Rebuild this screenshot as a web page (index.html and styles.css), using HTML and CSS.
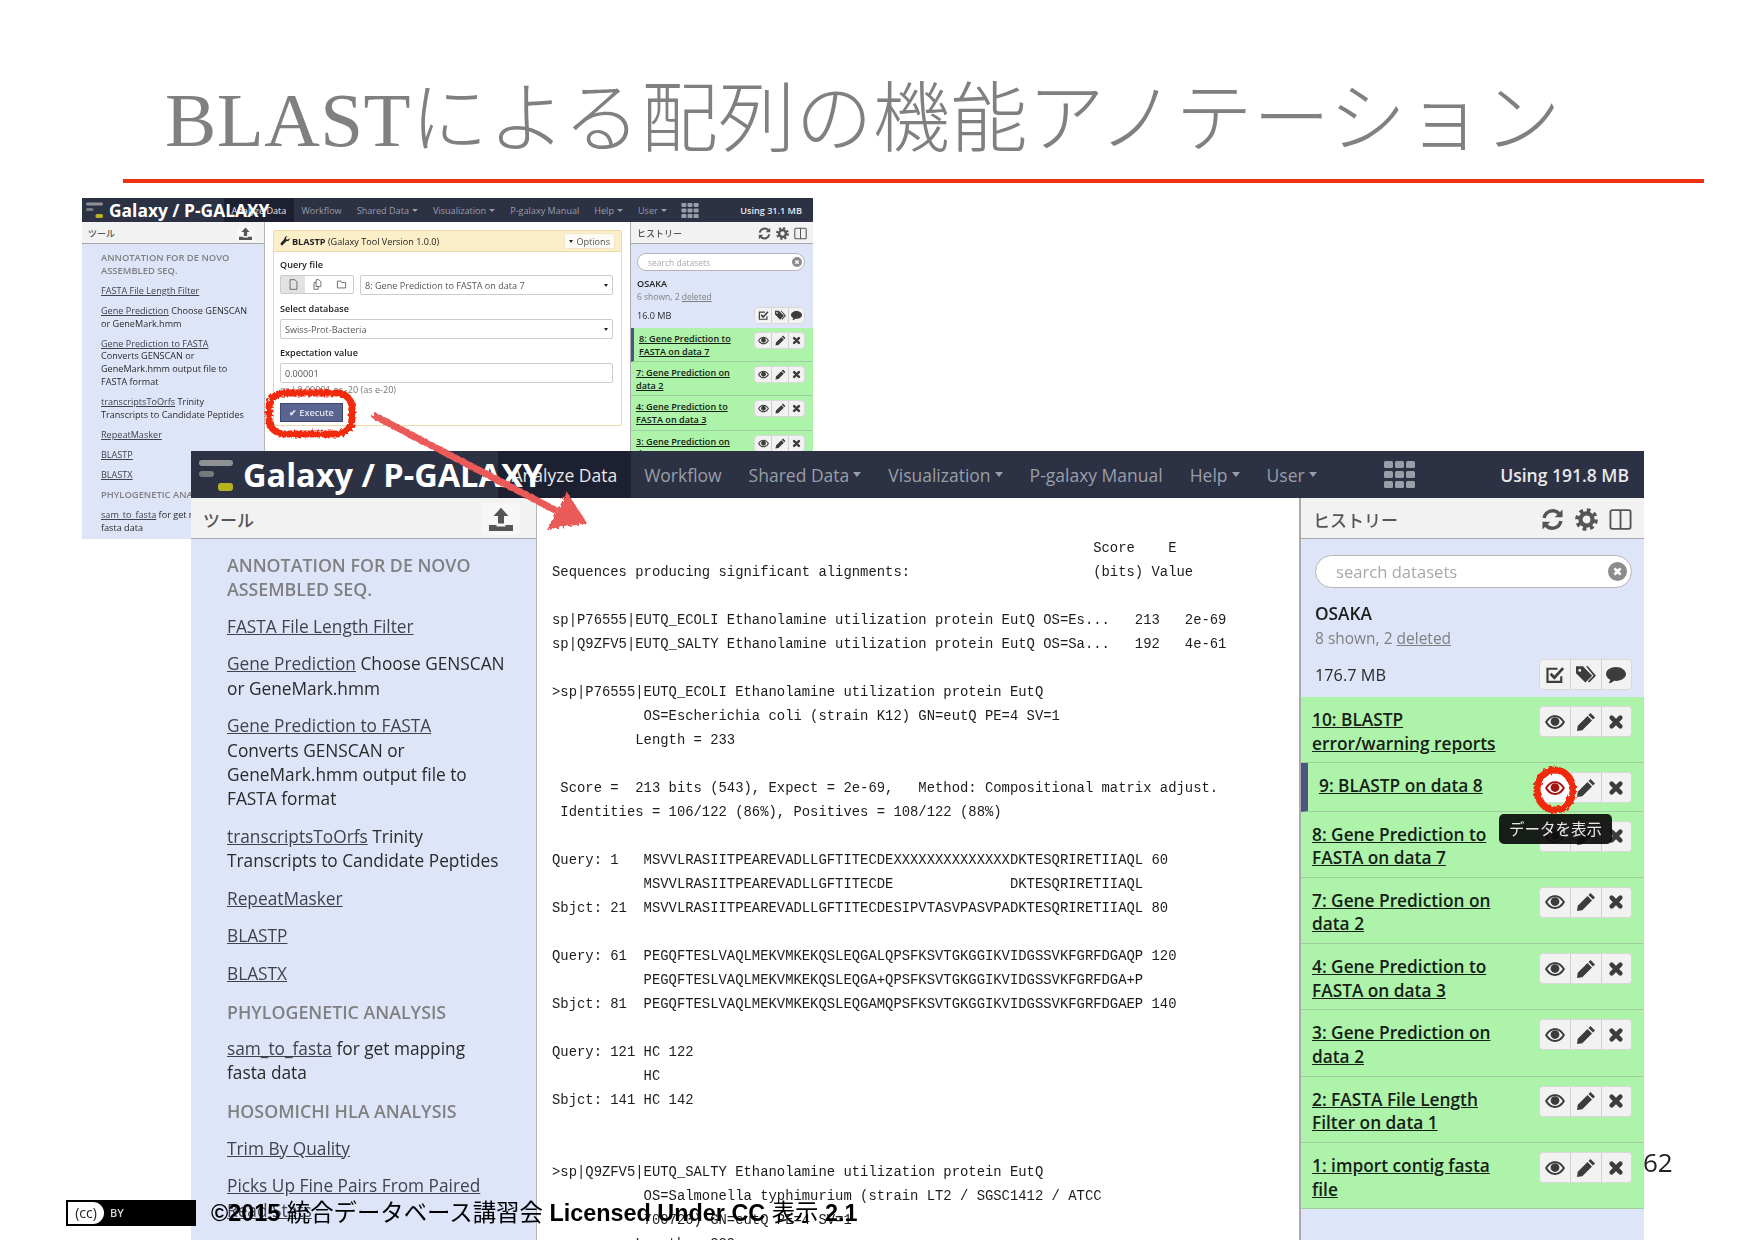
FILE: index.html
```html
<!DOCTYPE html>
<html lang="ja">
<head>
    <meta charset="UTF-8">
    <title>BLASTによる配列の機能アノテーション</title>
    <link rel="stylesheet" href="styles.css">
</head>
<body>
<svg class="icon-defs" xmlns="http://www.w3.org/2000/svg">
    <symbol id="i-logo" viewBox="0 0 34 32">
        <rect x="0" y="1" width="34" height="6" rx="3" fill="#8f9197"/>
        <rect x="0" y="12" width="15" height="6" rx="3" fill="#77797f"/>
        <rect x="19" y="24" width="15" height="8" rx="3" fill="#b7b320"/>
    </symbol>
    <symbol id="i-grid" viewBox="0 0 31 27">
        <rect x="0" y="0" width="9" height="7" rx="1.5"/><rect x="11" y="0" width="9" height="7" rx="1.5"/><rect x="22" y="0" width="9" height="7" rx="1.5"/>
        <rect x="0" y="10" width="9" height="7" rx="1.5"/><rect x="11" y="10" width="9" height="7" rx="1.5"/><rect x="22" y="10" width="9" height="7" rx="1.5"/>
        <rect x="0" y="20" width="9" height="7" rx="1.5"/><rect x="11" y="20" width="9" height="7" rx="1.5"/><rect x="22" y="20" width="9" height="7" rx="1.5"/>
    </symbol>
    <symbol id="i-upload" viewBox="0 0 16 16">
        <path d="M8 .5 13 6H10V11H6V6H3Z"/>
        <path d="M0 12H5V13H11V12H16V16H0Z"/>
    </symbol>
    <symbol id="i-sync" viewBox="0 0 16 16">
        <path d="M2.2 7A6 6 0 0 1 12.6 4" fill="none" stroke="currentColor" stroke-width="2.4"/>
        <path d="M15 1V6.5H9.5Z"/>
        <path d="M13.8 9A6 6 0 0 1 3.4 12" fill="none" stroke="currentColor" stroke-width="2.4"/>
        <path d="M1 15V9.5H6.5Z"/>
    </symbol>
    <symbol id="i-gear" viewBox="0 0 16 16">
        <circle cx="8" cy="8" r="4.2" fill="none" stroke="currentColor" stroke-width="3"/>
        <circle cx="8" cy="8" r="6.6" fill="none" stroke="currentColor" stroke-width="2.6" stroke-dasharray="2.6 2.58"/>
    </symbol>
    <symbol id="i-columns" viewBox="0 0 16 16">
        <rect x="1" y="1.5" width="14" height="13" rx="1.2" fill="none" stroke="currentColor" stroke-width="1.3"/>
        <path d="M8 1.5V14.5" stroke="currentColor" stroke-width="1.3"/>
    </symbol>
    <symbol id="i-clear" viewBox="0 0 16 16">
        <path fill-rule="evenodd" d="M8 0a8 8 0 1 0 0 16A8 8 0 0 0 8 0zM4.6 6.2 6.2 4.6 8 6.4l1.8-1.8 1.6 1.6L9.6 8l1.8 1.8-1.6 1.6L8 9.6l-1.8 1.8-1.6-1.6L6.4 8z"/>
    </symbol>
    <symbol id="i-check" viewBox="0 0 16 16">
        <path d="M13 9V13.5H2V3H10" fill="none" stroke="currentColor" stroke-width="1.7"/>
        <path d="M4.5 7 7.5 10.2 14.5 2.5" fill="none" stroke="currentColor" stroke-width="2.2"/>
    </symbol>
    <symbol id="i-tags" viewBox="0 0 16 16">
        <path fill-rule="evenodd" d="M0 1H5.5L13 8.5 7.5 14 0 6.5ZM3 3a1.2 1.2 0 1 0 0 2.4A1.2 1.2 0 0 0 3 3Z"/>
        <path d="M8 1H9.5L16 8.5 10.5 14 9.5 13 14 8.5Z"/>
    </symbol>
    <symbol id="i-comment" viewBox="0 0 16 16">
        <path d="M8 1.5C3.6 1.5 0 4 0 7.2c0 2 1.4 3.6 3.4 4.6C3.2 13 2.6 14 2 14.6c1.7-.1 3.4-1 4.4-2 .5.1 1 .1 1.6.1 4.4 0 8-2.5 8-5.5S12.4 1.500 8 1.500Z"/>
    </symbol>
    <symbol id="i-eye" viewBox="0 0 16 16">
        <path fill-rule="evenodd" d="M0 8C2.500 3.500 5.500 2.500 8 2.500S13.500 3.500 16 8c-2.500 4.500-5.500 5.500-8 5.500S2.500 12.500 0 8ZM1.800 8C3.800 11 6 12 8 12s4.200-1 6.200-4C12.200 5 10 4 8 4S3.800 5 1.800 8Z"/>
        <circle cx="8" cy="7.600" r="3.500"/>
    </symbol>
    <symbol id="i-pencil" viewBox="0 0 16 16">
        <path d="M11.600 .8 15.200 4.400 13.600 6 10 2.400ZM9.200 3.200 12.800 6.800 5 14.600 .8 15.200 1.400 11Z"/>
    </symbol>
    <symbol id="i-close" viewBox="0 0 16 16">
        <path d="M4.500 4.500 11.500 11.500M11.500 4.500 4.500 11.500" fill="none" stroke="currentColor" stroke-width="3.600" stroke-linecap="round"/>
    </symbol>
    <symbol id="i-wrench" viewBox="0 0 16 16">
        <path d="M15.500 3.500 12.500 6 10 5.200 9.500 3 12 .5C9.500 -.2 7 1.500 7.200 4.500L.5 12.500 3 15.500 10.500 8C13.500 8.500 16 6.500 15.500 3.500Z"/>
    </symbol>
    <symbol id="i-file" viewBox="0 0 16 16">
        <path d="M3 1H10L13 4V15H3Z" fill="none" stroke="currentColor" stroke-width="1.200"/>
    </symbol>
    <symbol id="i-files" viewBox="0 0 16 16">
        <path d="M6 1H10L13 4V11H6ZM3 5H6M3 5V15H9V11" fill="none" stroke="currentColor" stroke-width="1.200"/>
    </symbol>
    <symbol id="i-folder" viewBox="0 0 16 16">
        <path d="M2 3H7L8 5H14V13H2Z" fill="none" stroke="currentColor" stroke-width="1.200"/>
    </symbol>
</svg>

<div class="slide">
    <h1 class="slide-title">BLASTによる配列の機能アノテーション</h1>
    <div class="slide-rule"></div>

    <!-- small screenshot, tool form -->
    <div class="win win-small">
        <div class="nav">
            <div class="brand"><svg class="logo"><use href="#i-logo"/></svg><span class="brand-text">Galaxy / P-GALAXY</span></div>
            <div class="nav-item nav-active">Analyze Data</div>
            <div class="nav-item">Workflow</div>
            <div class="nav-item caret">Shared Data</div>
            <div class="nav-item caret">Visualization</div>
            <div class="nav-item">P-galaxy Manual</div>
            <div class="nav-item caret">Help</div>
            <div class="nav-item caret">User</div>
            <svg class="nav-grid"><use href="#i-grid"/></svg>
            <div class="nav-usage">Using 31.1 MB</div>
        </div>
        <div class="panels">
            <div class="tools">
                <div class="panel-head">
                    <span class="panel-title">ツール</span>
                    <span class="head-btn"><svg class="upload"><use href="#i-upload"/></svg></span>
                </div>
                <div class="tool-list">
                    <div class="tool-group">ANNOTATION FOR DE NOVO<br>ASSEMBLED SEQ.</div>
                    <div class="tool"><a>FASTA File Length Filter</a></div>
                    <div class="tool"><a>Gene Prediction</a> Choose GENSCAN<br>or GeneMark.hmm</div>
                    <div class="tool"><a>Gene Prediction to FASTA</a><br>Converts GENSCAN or<br>GeneMark.hmm output file to<br>FASTA format</div>
                    <div class="tool"><a>transcriptsToOrfs</a> Trinity<br>Transcripts to Candidate Peptides</div>
                    <div class="tool"><a>RepeatMasker</a></div>
                    <div class="tool"><a>BLASTP</a></div>
                    <div class="tool"><a>BLASTX</a></div>
                    <div class="tool-group">PHYLOGENETIC ANALYSIS</div>
                    <div class="tool"><a>sam_to_fasta</a> for get mapping<br>fasta data</div>
                </div>
            </div>
            <div class="center">
                <div class="form-card">
                    <div class="form-head">
                        <svg class="wrench"><use href="#i-wrench"/></svg>
                        <span><b>BLASTP</b> (Galaxy Tool Version 1.0.0)</span>
                        <span class="options"><i class="caret-dark"></i>Options</span>
                    </div>
                    <div class="form-body">
                        <div class="form-label">Query file</div>
                        <div class="form-row">
                            <div class="file-btns">
                                <span class="file-btn file-btn-on"><svg><use href="#i-file"/></svg></span>
                                <span class="file-btn"><svg><use href="#i-files"/></svg></span>
                                <span class="file-btn"><svg><use href="#i-folder"/></svg></span>
                            </div>
                            <div class="select">8: Gene Prediction to FASTA on data 7<i class="caret-dark"></i></div>
                        </div>
                        <div class="form-label">Select database</div>
                        <div class="select">Swiss-Prot-Bacteria<i class="caret-dark"></i></div>
                        <div class="form-label">Expectation value</div>
                        <div class="select">0.00001</div>
                        <div class="form-hint">ex.) 0.00001 or -20 (as e-20)</div>
                        <div class="execute">✔ Execute</div>
                    </div>
                </div>
            </div>
            <div class="history">
                <div class="panel-head">
                    <span class="panel-title">ヒストリー</span>
                    <span class="head-icons">
                        <svg><use href="#i-sync"/></svg>
                        <svg><use href="#i-gear"/></svg>
                        <svg><use href="#i-columns"/></svg>
                    </span>
                </div>
                <div class="hist-top">
                    <div class="search"><span>search datasets</span><svg><use href="#i-clear"/></svg></div>
                    <div class="hist-name">OSAKA</div>
                    <div class="hist-shown">6 shown, 2 <u>deleted</u></div>
                    <div class="hist-size">
                        <span>16.0 MB</span>
                        <span class="acts"><span class="act"><svg><use href="#i-check"/></svg></span><span class="act"><svg><use href="#i-tags"/></svg></span><span class="act"><svg><use href="#i-comment"/></svg></span></span>
                    </div>
                </div>
                <div class="item item-current">
                    <a>8: Gene Prediction to<br>FASTA on data 7</a>
                    <span class="acts"><span class="act"><svg><use href="#i-eye"/></svg></span><span class="act"><svg><use href="#i-pencil"/></svg></span><span class="act"><svg><use href="#i-close"/></svg></span></span>
                </div>
                <div class="item">
                    <a>7: Gene Prediction on<br>data 2</a>
                    <span class="acts"><span class="act"><svg><use href="#i-eye"/></svg></span><span class="act"><svg><use href="#i-pencil"/></svg></span><span class="act"><svg><use href="#i-close"/></svg></span></span>
                </div>
                <div class="item">
                    <a>4: Gene Prediction to<br>FASTA on data 3</a>
                    <span class="acts"><span class="act"><svg><use href="#i-eye"/></svg></span><span class="act"><svg><use href="#i-pencil"/></svg></span><span class="act"><svg><use href="#i-close"/></svg></span></span>
                </div>
                <div class="item">
                    <a>3: Gene Prediction on<br>data 2</a>
                    <span class="acts"><span class="act"><svg><use href="#i-eye"/></svg></span><span class="act"><svg><use href="#i-pencil"/></svg></span><span class="act"><svg><use href="#i-close"/></svg></span></span>
                </div>
            </div>
        </div>
    </div>

    <!-- large screenshot, BLAST result -->
    <div class="win win-large">
        <div class="nav">
            <div class="brand"><svg class="logo"><use href="#i-logo"/></svg><span class="brand-text">Galaxy / P-GALAXY</span></div>
            <div class="nav-item nav-active">Analyze Data</div>
            <div class="nav-item">Workflow</div>
            <div class="nav-item caret">Shared Data</div>
            <div class="nav-item caret">Visualization</div>
            <div class="nav-item">P-galaxy Manual</div>
            <div class="nav-item caret">Help</div>
            <div class="nav-item caret">User</div>
            <svg class="nav-grid"><use href="#i-grid"/></svg>
            <div class="nav-usage">Using 191.8 MB</div>
        </div>
        <div class="panels">
            <div class="tools">
                <div class="panel-head">
                    <span class="panel-title">ツール</span>
                    <span class="head-btn"><svg class="upload"><use href="#i-upload"/></svg></span>
                </div>
                <div class="tool-list">
                    <div class="tool-group">ANNOTATION FOR DE NOVO<br>ASSEMBLED SEQ.</div>
                    <div class="tool"><a>FASTA File Length Filter</a></div>
                    <div class="tool"><a>Gene Prediction</a> Choose GENSCAN<br>or GeneMark.hmm</div>
                    <div class="tool"><a>Gene Prediction to FASTA</a><br>Converts GENSCAN or<br>GeneMark.hmm output file to<br>FASTA format</div>
                    <div class="tool"><a>transcriptsToOrfs</a> Trinity<br>Transcripts to Candidate Peptides</div>
                    <div class="tool"><a>RepeatMasker</a></div>
                    <div class="tool"><a>BLASTP</a></div>
                    <div class="tool"><a>BLASTX</a></div>
                    <div class="tool-group">PHYLOGENETIC ANALYSIS</div>
                    <div class="tool"><a>sam_to_fasta</a> for get mapping<br>fasta data</div>
                    <div class="tool-group">HOSOMICHI HLA ANALYSIS</div>
                    <div class="tool"><a>Trim By Quality</a></div>
                    <div class="tool"><a>Picks Up Fine Pairs From Paired<br>Read Stats</a></div>
                </div>
            </div>
            <div class="center">
<pre class="blast">                                                                 Score    E
Sequences producing significant alignments:                      (bits) Value

sp|P76555|EUTQ_ECOLI Ethanolamine utilization protein EutQ OS=Es...   213   2e-69
sp|Q9ZFV5|EUTQ_SALTY Ethanolamine utilization protein EutQ OS=Sa...   192   4e-61

&gt;sp|P76555|EUTQ_ECOLI Ethanolamine utilization protein EutQ
           OS=Escherichia coli (strain K12) GN=eutQ PE=4 SV=1
          Length = 233

 Score =  213 bits (543), Expect = 2e-69,   Method: Compositional matrix adjust.
 Identities = 106/122 (86%), Positives = 108/122 (88%)

Query: 1   MSVVLRASIITPEAREVADLLGFTITECDEXXXXXXXXXXXXXXDKTESQRIRETIIAQL 60
           MSVVLRASIITPEAREVADLLGFTITECDE              DKTESQRIRETIIAQL
Sbjct: 21  MSVVLRASIITPEAREVADLLGFTITECDESIPVTASVPASVPADKTESQRIRETIIAQL 80

Query: 61  PEGQFTESLVAQLMEKVMKEKQSLEQGALQPSFKSVTGKGGIKVIDGSSVKFGRFDGAQP 120
           PEGQFTESLVAQLMEKVMKEKQSLEQGA+QPSFKSVTGKGGIKVIDGSSVKFGRFDGA+P
Sbjct: 81  PEGQFTESLVAQLMEKVMKEKQSLEQGAMQPSFKSVTGKGGIKVIDGSSVKFGRFDGAEP 140

Query: 121 HC 122
           HC
Sbjct: 141 HC 142


&gt;sp|Q9ZFV5|EUTQ_SALTY Ethanolamine utilization protein EutQ
           OS=Salmonella typhimurium (strain LT2 / SGSC1412 / ATCC
           700720) GN=eutQ PE=4 SV=1
          Length = 229</pre>
            </div>
            <div class="history">
                <div class="panel-head">
                    <span class="panel-title">ヒストリー</span>
                    <span class="head-icons">
                        <svg><use href="#i-sync"/></svg>
                        <svg><use href="#i-gear"/></svg>
                        <svg><use href="#i-columns"/></svg>
                    </span>
                </div>
                <div class="hist-top">
                    <div class="search"><span>search datasets</span><svg><use href="#i-clear"/></svg></div>
                    <div class="hist-name">OSAKA</div>
                    <div class="hist-shown">8 shown, 2 <u>deleted</u></div>
                    <div class="hist-size">
                        <span>176.7 MB</span>
                        <span class="acts"><span class="act"><svg><use href="#i-check"/></svg></span><span class="act"><svg><use href="#i-tags"/></svg></span><span class="act"><svg><use href="#i-comment"/></svg></span></span>
                    </div>
                </div>
                <div class="item">
                    <a>10: BLASTP<br>error/warning reports</a>
                    <span class="acts"><span class="act"><svg><use href="#i-eye"/></svg></span><span class="act"><svg><use href="#i-pencil"/></svg></span><span class="act"><svg><use href="#i-close"/></svg></span></span>
                </div>
                <div class="item item-current">
                    <a>9: BLASTP on data 8</a>
                    <span class="acts"><span class="act act-hot"><svg><use href="#i-eye"/></svg></span><span class="act"><svg><use href="#i-pencil"/></svg></span><span class="act"><svg><use href="#i-close"/></svg></span></span>
                </div>
                <div class="item">
                    <a>8: Gene Prediction to<br>FASTA on data 7</a>
                    <span class="acts"><span class="act"><svg><use href="#i-eye"/></svg></span><span class="act"><svg><use href="#i-pencil"/></svg></span><span class="act"><svg><use href="#i-close"/></svg></span></span>
                </div>
                <div class="item">
                    <a>7: Gene Prediction on<br>data 2</a>
                    <span class="acts"><span class="act"><svg><use href="#i-eye"/></svg></span><span class="act"><svg><use href="#i-pencil"/></svg></span><span class="act"><svg><use href="#i-close"/></svg></span></span>
                </div>
                <div class="item">
                    <a>4: Gene Prediction to<br>FASTA on data 3</a>
                    <span class="acts"><span class="act"><svg><use href="#i-eye"/></svg></span><span class="act"><svg><use href="#i-pencil"/></svg></span><span class="act"><svg><use href="#i-close"/></svg></span></span>
                </div>
                <div class="item">
                    <a>3: Gene Prediction on<br>data 2</a>
                    <span class="acts"><span class="act"><svg><use href="#i-eye"/></svg></span><span class="act"><svg><use href="#i-pencil"/></svg></span><span class="act"><svg><use href="#i-close"/></svg></span></span>
                </div>
                <div class="item">
                    <a>2: FASTA File Length<br>Filter on data 1</a>
                    <span class="acts"><span class="act"><svg><use href="#i-eye"/></svg></span><span class="act"><svg><use href="#i-pencil"/></svg></span><span class="act"><svg><use href="#i-close"/></svg></span></span>
                </div>
                <div class="item">
                    <a>1: import contig fasta<br>file</a>
                    <span class="acts"><span class="act"><svg><use href="#i-eye"/></svg></span><span class="act"><svg><use href="#i-pencil"/></svg></span><span class="act"><svg><use href="#i-close"/></svg></span></span>
                </div>
            </div>
        </div>
    </div>

    <div class="tooltip">データを表示</div>

    <!-- hand drawn red marks over the screenshots -->
    <svg class="marks" viewBox="0 0 1754 1240">
        <defs>
            <filter id="rough" x="-10%" y="-10%" width="120%" height="120%">
                <feTurbulence type="fractalNoise" baseFrequency="0.35" numOctaves="2" seed="4"/>
                <feDisplacementMap in="SourceGraphic" scale="5"/>
            </filter>
        </defs>
        <g filter="url(#rough)">
            <rect class="mark-ring" x="269" y="393" width="83" height="41" rx="15"/>
            <ellipse class="mark-ring" cx="1555" cy="790" rx="18" ry="20"/>
            <g class="mark-arrow">
                <path d="M373 415 L557 511" fill="none" stroke="#e95a58" stroke-width="7"/>
                <path d="M587 523 L567 492 L547 530Z" fill="#e95a58"/>
            </g>
        </g>
    </svg>

    <div class="page-num">62</div>

    <div class="license">
        <div class="cc-badge"><span class="cc-mark">(cc)</span><span class="cc-by">BY</span></div>
        <div class="license-text"><b>©2015</b> 統合データベース講習会 <b>Licensed Under CC</b> 表示 <b>2.1</b></div>
    </div>
</div>
</body>
</html>
```

FILE: styles.css
```css
* {
    box-sizing: border-box;
}

html, body {
    margin: 0;
    padding: 0;
    background: white;
}

.icon-defs {
    position: absolute;
    width: 0;
    height: 0;
}

.slide {
    position: relative;
    width: 1754px;
    height: 1240px;
    overflow: hidden;
    background: white;
    font-family: "Open Sans", "Noto Sans CJK JP", sans-serif;
}

.slide-title {
    margin: 0;
    padding: 74px 0 0 165px;
    height: 179px;
    font-family: "Liberation Serif", "Noto Sans CJK JP", serif;
    font-size: 77px;
    font-weight: 300;
    line-height: 92px;
    letter-spacing: 0.4px;
    color: #808080;
    white-space: nowrap;
}

.slide-rule {
    height: 4px;
    margin: 0 50px 0 123px;
    background: #f03010;
}

/* screenshots */
.win {
    position: absolute;
    display: flex;
    flex-direction: column;
    background: white;
    color: #2a2a2a;
    filter: blur(0.35px);
}

.win-small {
    left: 82px;
    top: 198px;
    width: 731px;
    height: 341px;
    font-size: 9.1px;
    filter: blur(0.45px);
}

.win-large {
    left: 191px;
    top: 451px;
    width: 1453px;
    height: 789px;
    font-size: 17.3px;
}

.nav {
    display: flex;
    align-items: stretch;
    flex: none;
    background: #2c3144;
    color: #9a9ea8;
}

.win-large .nav {
    height: 47px;
    font-size: 17.5px;
}

.win-small .nav {
    height: 24px;
    font-size: 9.1px;
}

.brand {
    display: flex;
    align-items: center;
    flex: none;
    position: relative;
    z-index: 1;
    color: white;
    font-weight: 700;
    white-space: nowrap;
}

.win-large .brand {
    width: 307px;
    padding-left: 8px;
    gap: 10px;
    font-size: 32.5px;
}

.win-small .brand {
    width: 142px;
    padding-left: 4px;
    gap: 6px;
    font-size: 17.4px;
}

.logo {
    flex: none;
}

.win-large .logo {
    width: 34px;
    height: 32px;
}

.win-small .logo {
    width: 17px;
    height: 16px;
}

.nav-item {
    display: flex;
    align-items: center;
    white-space: nowrap;
}

.win-large .nav-item {
    padding: 0 13.5px;
}

.win-small .nav-item {
    padding: 0 7.5px;
}

.nav-active {
    background: #1d2030;
    color: #e8e8ea;
}

.caret::after {
    content: "";
    margin-left: 4px;
    border-top: 5px solid #9a9ea8;
    border-left: 4.5px solid transparent;
    border-right: 4.5px solid transparent;
}

.win-small .caret::after {
    margin-left: 3px;
    border-width: 3px 3px 0;
}

.nav-grid {
    flex: none;
    align-self: center;
    fill: #9a9ea8;
}

.win-large .nav-grid {
    width: 31px;
    height: 27px;
    margin-left: 54px;
}

.win-small .nav-grid {
    width: 18px;
    height: 15px;
    margin-left: 7px;
}

.nav-usage {
    display: flex;
    align-items: center;
    margin-left: auto;
    color: #e8e8ea;
    font-weight: 600;
}

.win-large .nav-usage {
    padding-right: 15px;
}

.win-small .nav-usage {
    padding-right: 11px;
}

.panels {
    display: flex;
    flex: 1;
    min-height: 0;
}

.tools, .history {
    flex: none;
    display: flex;
    flex-direction: column;
    background: #dfe5f9;
}

.win-large .tools {
    width: 346px;
    border-right: 1px solid #b5b5b5;
}

.win-small .tools {
    width: 183px;
    border-right: 1px solid #b5b5b5;
}

.win-large .history {
    width: 345px;
    border-left: 2px solid #aaaaaa;
}

.win-small .history {
    width: 183px;
    border-left: 1px solid #aaaaaa;
}

.center {
    flex: 1;
    min-width: 0;
    background: white;
}

.panel-head {
    display: flex;
    align-items: center;
    justify-content: space-between;
    flex: none;
    background: #f2f2f2;
    border-bottom: 1px solid #a8a8a8;
    color: #555555;
    font-weight: 500;
}

.win-large .panel-head {
    height: 41px;
    padding: 2px 12px 0;
    font-size: 17px;
}

.win-small .panel-head {
    height: 22px;
    padding: 2px 6px 0;
    font-size: 9px;
}

.head-btn {
    display: flex;
    align-items: center;
    justify-content: center;
    background: #f7f7f7;
    border-radius: 3px;
    color: #555555;
}

.win-large .head-btn {
    width: 38px;
    height: 32px;
    margin-right: 4px;
}

.win-small .head-btn {
    width: 17px;
    height: 16px;
    margin-right: 4px;
}

.upload {
    fill: #555555;
}

.win-large .upload {
    width: 24px;
    height: 24px;
}

.win-small .upload {
    width: 13px;
    height: 13px;
}

.head-icons {
    display: flex;
    align-items: center;
    fill: #555555;
    color: #555555;
}

.win-large .head-icons {
    gap: 11px;
}

.win-large .head-icons svg {
    width: 23px;
    height: 23px;
}

.win-small .head-icons {
    gap: 5px;
}

.win-small .head-icons svg {
    width: 13px;
    height: 13px;
}

/* tool list */
.win-large .tool-list {
    padding: 14px 0 0 36px;
    line-height: 24.3px;
}

.win-small .tool-list {
    padding: 8px 0 0 19px;
    line-height: 12.7px;
}

.win-large .tool, .win-large .tool-group {
    margin-bottom: 13.3px;
}

.win-small .tool, .win-small .tool-group {
    margin-bottom: 7.4px;
}

.tool-group {
    color: #808080;
    font-weight: 600;
}

.win-large .tool-group {
    font-size: 17.8px;
}

.win-small .tool-group {
    font-size: 9.4px;
}

.tool a {
    color: #40424e;
    text-decoration: underline;
}

/* blast text */
.blast {
    margin: 0;
    padding: 38px 0 0 15px;
    font-family: "Liberation Mono", monospace;
    font-size: 13.88px;
    line-height: 24px;
    color: #1c1c1c;
}

/* history */
.hist-top {
    flex: none;
}

.win-large .hist-top {
    height: 158px;
    padding: 16px 12px 0 14px;
}

.win-small .hist-top {
    height: 84px;
    padding: 9px 8px 0 6px;
}

.search {
    display: flex;
    align-items: center;
    justify-content: space-between;
    background: white;
    border: 1px solid #b5b5b5;
    color: #a8a8a8;
}

.win-large .search {
    height: 33px;
    border-radius: 17px;
    padding: 0 4px 0 20px;
    font-size: 16.6px;
}

.win-small .search {
    height: 18px;
    border-radius: 9px;
    padding: 0 2px 0 10px;
    font-size: 8.5px;
}

.search svg {
    fill: #8c8c8c;
}

.win-large .search svg {
    width: 19px;
    height: 19px;
}

.win-small .search svg {
    width: 10px;
    height: 10px;
}

.hist-name {
    font-weight: 600;
    color: #1c1c1c;
}

.win-large .hist-name {
    margin-top: 14px;
    line-height: 24px;
}

.win-small .hist-name {
    margin-top: 6px;
    line-height: 13px;
}

.hist-shown {
    color: #808080;
}

.win-large .hist-shown {
    line-height: 25px;
    font-size: 15.500px;
}

.win-small .hist-shown {
    line-height: 13px;
    font-size: 8.500px;
}

.hist-size {
    display: flex;
    align-items: center;
    justify-content: space-between;
}

.win-large .hist-size {
    margin-top: 8px;
    font-size: 16.300px;
}

.win-small .hist-size {
    margin-top: 4px;
}

.acts {
    display: flex;
    flex: none;
    background: #f2f2f2;
    border: 1px solid #d9d9d9;
    border-radius: 4px;
}

.act {
    display: flex;
    align-items: center;
    justify-content: center;
    fill: #3c3c3c;
    color: #3c3c3c;
}

.act + .act {
    border-left: 1px solid #d0d0d0;
}

.win-large .act {
    width: 30.3px;
    height: 29px;
}

.win-large .act svg {
    width: 20px;
    height: 20px;
}

.win-small .act {
    width: 16.3px;
    height: 15px;
}

.win-small .act svg {
    width: 11px;
    height: 11px;
}

.act-hot {
    background: white;
    fill: #a31414;
}

.item {
    display: flex;
    justify-content: space-between;
    align-items: flex-start;
    background: #aef3aa;
    border-bottom: 1px solid #9fcf9f;
    font-weight: 600;
}

.win-large .item {
    padding: 11px 12px 7.3px 11px;
    line-height: 23.5px;
}

.win-large .item .acts {
    margin-top: -2px;
}

.win-small .item {
    padding: 5px 8px 3px 5px;
    line-height: 12.6px;
}

.win-small .item .acts {
    margin-top: -1px;
}

.win-large .item-current {
    border-left: 7px solid #4c5580;
    padding-left: 11px;
}

.win-small .item-current {
    border-left: 3px solid #4c5580;
    padding-left: 5px;
}

.item a {
    color: #152015;
    text-decoration: underline;
}

/* tool form */
.form-card {
    margin: 8px 8px 0;
    background: white;
    border: 1px solid #ecd9a8;
    border-radius: 2px;
    height: 196px;
}

.form-head {
    display: flex;
    align-items: center;
    height: 21px;
    padding: 0 6px;
    background: #fbeec8;
    border-bottom: 1px solid #ecd9a8;
    color: #222222;
}

.wrench {
    width: 10px;
    height: 10px;
    margin-right: 2px;
    fill: #222222;
}

.options {
    display: flex;
    align-items: center;
    gap: 3px;
    margin-left: auto;
    height: 16px;
    padding: 0 4px;
    background: #fbfaf5;
    border: 1px solid #efe6cc;
    border-radius: 2px;
    color: #555555;
}

.caret-dark {
    border-top: 3px solid #222222;
    border-left: 2.5px solid transparent;
    border-right: 2.5px solid transparent;
}

.form-body {
    padding: 6px 8px 0 6px;
}

.form-label {
    font-weight: 600;
    line-height: 13px;
    margin: 0 0 4px;
    color: #222222;
}

.form-row {
    display: flex;
    gap: 6px;
    margin-top: 4px;
}

.select {
    display: flex;
    align-items: center;
    justify-content: space-between;
    flex: 1;
    height: 20px;
    padding: 0 4px;
    background: white;
    border: 1px solid #cccccc;
    border-radius: 2px;
    color: #555555;
    margin-bottom: 7px;
}

.file-btns {
    display: flex;
    flex: none;
    height: 19px;
    border: 1px solid #cccccc;
    border-radius: 2px;
}

.file-btn {
    display: flex;
    align-items: center;
    justify-content: center;
    width: 24px;
    color: #555555;
}

.file-btn svg {
    width: 11px;
    height: 11px;
}

.file-btn-on {
    background: #e2e2e2;
}

.form-hint {
    margin-top: -7px;
    line-height: 13px;
    color: #777777;
}

.execute {
    display: inline-flex;
    align-items: center;
    height: 19px;
    margin-top: 7px;
    padding: 0 8px;
    background: #5a6490;
    border: 1px solid #3f4770;
    color: #dfe2ee;
    font-weight: 600;
}

/* overlay bits */
.tooltip {
    position: absolute;
    left: 1499px;
    top: 814px;
    width: 113px;
    height: 30px;
    border-radius: 5px;
    background: rgba(12, 12, 12, 0.93);
    color: #e8e8e8;
    font-size: 15.5px;
    line-height: 30px;
    text-align: center;
}

.marks {
    position: absolute;
    left: 0;
    top: 0;
    width: 1754px;
    height: 1240px;
    pointer-events: none;
}

.mark-ring {
    fill: none;
    stroke: #f22c10;
    stroke-width: 7;
}

.page-num {
    position: absolute;
    left: 1643px;
    top: 1144px;
    font-family: "Open Sans", sans-serif;
    font-size: 26px;
    line-height: 36px;
    color: #222222;
}

.license {
    position: absolute;
    left: 66px;
    top: 1197px;
    display: flex;
    align-items: center;
    gap: 15px;
    color: black;
}

.cc-badge {
    display: flex;
    width: 130px;
    height: 26px;
    background: black;
    border: 2px solid black;
    color: #d8d8d8;
    font-size: 11px;
}

.cc-mark {
    width: 36px;
    background: white;
    border-radius: 0 11px 11px 0;
    color: #222222;
    font-size: 14px;
    line-height: 21px;
    text-align: center;
}

.cc-by {
    padding-left: 6px;
    font-weight: 600;
    line-height: 22px;
}

.license-text {
    font-family: "Liberation Sans", "Noto Sans CJK JP", sans-serif;
    font-size: 23.4px;
    line-height: 32px;
    white-space: nowrap;
}
```
